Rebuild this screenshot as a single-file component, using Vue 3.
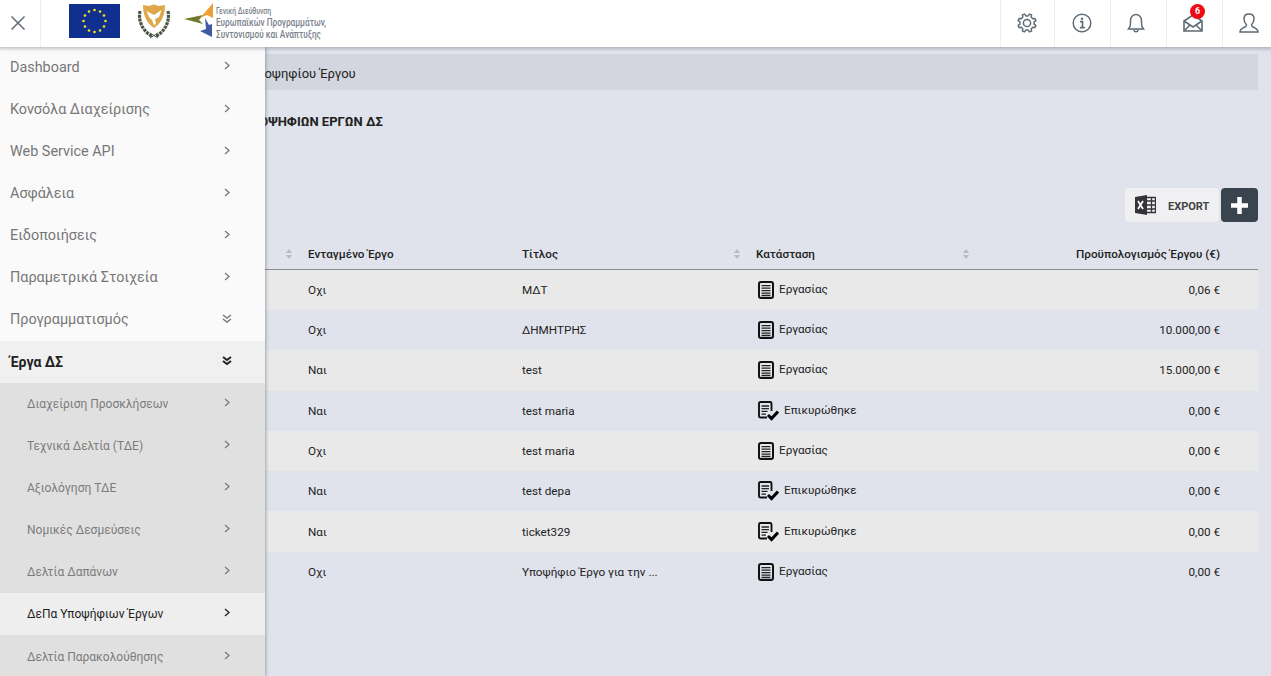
<script setup>
const menu = [
  { label: 'Dashboard' },
  { label: 'Κονσόλα Διαχείρισης' },
  { label: 'Web Service API' },
  { label: 'Ασφάλεια' },
  { label: 'Ειδοποιήσεις' },
  { label: 'Παραμετρικά Στοιχεία' },
  { label: 'Προγραμματισμός', open: true },
  { label: 'Έργα ΔΣ', open: true, active: true },
  { label: 'Διαχείριση Προσκλήσεων', sub: true },
  { label: 'Τεχνικά Δελτία (ΤΔΕ)', sub: true },
  { label: 'Αξιολόγηση ΤΔΕ', sub: true },
  { label: 'Νομικές Δεσμεύσεις', sub: true },
  { label: 'Δελτία Δαπάνων', sub: true },
  { label: 'ΔεΠα Υποψήφιων Έργων', sub: true, current: true },
  { label: 'Δελτία Παρακολούθησης', sub: true },
]
const W = 'Εργασίας'
const E = 'Επικυρώθηκε'
const rows = [
  ['Οχι', 'ΜΔΤ', W, '0,06 €'],
  ['Οχι', 'ΔΗΜΗΤΡΗΣ', W, '10.000,00 €'],
  ['Ναι', 'test', W, '15.000,00 €'],
  ['Ναι', 'test maria', E, '0,00 €'],
  ['Οχι', 'test maria', W, '0,00 €'],
  ['Ναι', 'test depa', E, '0,00 €'],
  ['Ναι', 'ticket329', E, '0,00 €'],
  ['Οχι', 'Υποψήφιο Έργο για την ...', W, '0,00 €'],
]
const stars = Array.from({ length: 12 }, (_, i) => {
  const a = (i * Math.PI) / 6
  return { x: 25.5 + 11 * Math.sin(a), y: 17 - 11 * Math.cos(a) }
})
const gear = (() => {
  const pts = []
  const n = 8
  for (let i = 0; i < n; i++) {
    const c = (i * 2 * Math.PI) / n + Math.PI / 8
    const step = (2 * Math.PI) / n
    const list = [[-0.3, 7.2], [-0.16, 9.2], [0.16, 9.2], [0.3, 7.2]]
    list.forEach(([o, r]) => {
      const a = c + o * step
      pts.push(`${(10 + r * Math.cos(a)).toFixed(2)} ${(10 + r * Math.sin(a)).toFixed(2)}`)
    })
  }
  return 'M' + pts.join('L') + 'Z'
})()
</script>

<template>
  <div class="page">
    <header class="top">
      <div class="close-cell">
        <svg width="16" height="16" viewBox="0 0 16 16"><path d="M1.500 1.500l13 13M14.500 1.500l-13 13" stroke="#5f6b76" stroke-width="1.500" fill="none"/></svg>
      </div>
      <div class="logos">
        <svg class="eu" width="51" height="34" viewBox="0 0 51 34">
          <rect width="51" height="34" fill="#10308f"/>
          <circle v-for="(s, i) in stars" :key="i" :cx="s.x" :cy="s.y" r="1.300" fill="#f7e017"/>
        </svg>
        <svg class="arms" width="34" height="36" viewBox="0 0 34 36">
          <path d="M6 2l6 1 5-1.500L22 3l6-1c0 12-5 19-11 23C11 21 6 14 6 2z" fill="#dfa64a"/>
          <path d="M9.500 8l7.500 4 7.500-5-2.500 7-4 2 1 4-2 2.500-2-5.500-3-3z" fill="#fff"/>
          <path d="M3 8c-2 9 2 20 12 25M31 8c2 9-2 20-12 25" stroke="#4b5644" stroke-width="3.200" stroke-dasharray="3 .8" fill="none"/>
          <path d="M13 35l8-5M21 35l-8-5" stroke="#555" stroke-width="1"/>
        </svg>
        <div class="dg">
          <svg width="30" height="37" viewBox="0 0 30 37">
            <path d="M0 16l19-4-4 5 4 4z" fill="#6f7a2f"/>
            <path d="M29 0L16 15l7-3 6 3z" fill="#ee9f35"/>
            <path d="M21 15l4 7 3-1v13L16 28l6-2z" fill="#3f5da3"/>
          </svg>
          <div class="dg-text">
            <span class="dg1">Γενική Διεύθυνση</span>
            <span class="dg2">Ευρωπαϊκών Προγραμμάτων,</span>
            <span class="dg2">Συντονισμού και Ανάπτυξης</span>
          </div>
        </div>
      </div>
      <div class="tools">
        <div class="tool t1">
          <svg width="20" height="20" viewBox="0 0 20 20" fill="none" stroke="#5f6b76" stroke-width="1.500"><path :d="gear" stroke-linejoin="round"/><circle cx="10" cy="10" r="3.600"/></svg>
        </div>
        <div class="tool t2">
          <svg width="20" height="20" viewBox="0 0 20 20" fill="none" stroke="#5f6b76" stroke-width="1.500"><circle cx="10" cy="10" r="8.800"/><circle cx="10" cy="5.800" r="1.200" fill="#5f6b76" stroke="none"/><path d="M8 8.700h2.500v6M7.800 14.700h5" stroke-width="1.700"/></svg>
        </div>
        <div class="tool t3">
          <svg width="18" height="20" viewBox="0 0 18 20" fill="none" stroke="#5f6b76" stroke-width="1.500"><path d="M1.500 16c1.500-1.500 2-3 2-6V7.500C3.500 4 6 1.500 9 1.500s5.500 2.500 5.500 6V10c0 3 .5 4.500 2 6z"/><path d="M7 16.500c0 3 4 3 4 0"/></svg>
        </div>
        <div class="tool t4">
          <svg width="20" height="18" viewBox="0 0 20 18" fill="none" stroke="#5f6b76" stroke-width="1.600"><path d="M1 7v10h18V7L10 1z"/><path d="M1 7l9 6 9-6M1 17l6.500-6.500M19 17l-6.500-6.500"/></svg>
          <span class="badge">6</span>
        </div>
        <div class="tool t5">
          <svg width="20" height="20" viewBox="0 0 20 20" fill="none" stroke="#5f6b76" stroke-width="1.500"><path d="M1 19h18c0-3-2-3.500-4-4.500-2-.8-2.500-1.500-2.500-2.800 1.500-1.500 2.500-3.500 2.500-6C15 3 13 1 10 1S5 3 5 5.700c0 2.500 1 4.500 2.500 6 0 1.300-.5 2-2.500 2.800-2 1-4 1.500-4 4.500z"/></svg>
        </div>
      </div>
    </header>

    <aside class="side">
      <div
        v-for="m in menu"
        :key="m.label"
        class="item"
        :class="{ sub: m.sub, active: m.active, current: m.current }"
      >
        <span>{{ m.label }}</span>
        <svg v-if="m.open" class="chev" width="10" height="9" viewBox="0 0 10 9" fill="none" stroke="currentColor" :stroke-width="m.active ? 2 : 1.400"><path d="M1 1l4 3 4-3M1 5l4 3 4-3"/></svg>
        <svg v-else class="chev" width="10" height="9" viewBox="0 0 10 9" fill="none" stroke="currentColor" stroke-width="1.300"><path d="M3 1l4 3.500L3 8"/></svg>
      </div>
    </aside>

    <main class="main">
      <div class="crumb">Υποψηφίου Έργου</div>
      <h1 class="title">ΥΠΟΨΗΦΙΩΝ ΕΡΓΩΝ ΔΣ</h1>
      <div class="actions">
        <div class="export">
          <svg width="21" height="20" viewBox="0 0 21 20"><path d="M0 2L12 0v20L0 18z" fill="#333539"/><path d="M3 6l5 8M8 6l-5 8" stroke="#fff" stroke-width="1.700"/><path d="M12 2.500h8.500v15H12M12 6h8.500M12 10h8.500M12 14h8.500M16.500 2.500v15" stroke="#333539" stroke-width="1.300" fill="none"/></svg>
          <span>EXPORT</span>
        </div>
        <div class="plus">
          <svg width="17" height="17" viewBox="0 0 17 17"><path d="M8.500 0v17M0 8.500h17" stroke="#fff" stroke-width="4.500"/></svg>
        </div>
      </div>
      <div class="table">
        <div class="row head">
          <div class="cell"><svg class="sort" width="6" height="10" viewBox="0 0 6 10"><path d="M3 0l3 4H0zM3 10L0 6h6z"/></svg></div>
          <div class="cell">Ενταγμένο Έργο</div>
          <div class="cell">Τίτλος<svg class="sort" width="6" height="10" viewBox="0 0 6 10"><path d="M3 0l3 4H0zM3 10L0 6h6z"/></svg></div>
          <div class="cell">Κατάσταση<svg class="sort" width="6" height="10" viewBox="0 0 6 10"><path d="M3 0l3 4H0zM3 10L0 6h6z"/></svg></div>
          <div class="cell num">Προϋπολογισμός Έργου (€)</div>
        </div>
        <div v-for="(r, i) in rows" :key="i" class="row" :class="{ odd: i % 2 === 0 }">
          <div class="cell"></div>
          <div class="cell">{{ r[0] }}</div>
          <div class="cell">{{ r[1] }}</div>
          <div class="cell status" :class="{ ok: r[2] === E }">
            <svg v-if="r[2] === W" width="16" height="18" viewBox="0 0 16 18" fill="none"><rect x="1" y="1" width="14" height="16" rx="2" stroke="#111" stroke-width="2"/><path d="M3.500 4.700h9M3.500 7.200h9M3.500 9.700h9M3.500 12.200h9M3.500 14.500h9" stroke="#222" stroke-width="1.300"/></svg>
            <svg v-else width="21" height="20" viewBox="0 0 21 20" fill="none"><path d="M9 16.500H2.500a1.500 1.500 0 0 1-1.500-1.500V2.500A1.500 1.500 0 0 1 2.500 1h9.500a1.500 1.500 0 0 1 1.500 1.500V10" stroke="#111" stroke-width="1.900"/><path d="M3.500 5h7.500M3.500 7.700h7.500M3.500 10.400h6M3.500 13.100h4.500" stroke="#222" stroke-width="1.300"/><path d="M10 14l3.500 3.500L20 10.500" stroke="#000" stroke-width="3"/></svg>
            <span>{{ r[2] }}</span>
          </div>
          <div class="cell num">{{ r[3] }}</div>
        </div>
      </div>
    </main>
  </div>
</template>

<style>
html, body { margin: 0; overflow: hidden; }
</style>

<style scoped>
.page {
  position: relative;
  height: 676px;
  overflow: hidden;
  background: #e0e3ec;
  font-family: Roboto, "Noto Sans", sans-serif;
  color: #222;
}
.top {
  position: relative;
  z-index: 3;
  display: flex;
  height: 47px;
  background: #fff;
  box-shadow: 0 1px 3px 1px rgba(90, 95, 110, .35);
}
.close-cell {
  width: 41px;
  box-sizing: border-box;
  display: flex;
  align-items: center;
  justify-content: center;
  padding: 0 5px 2px 0;
  border-right: 1px solid #eee;
}
.logos {
  display: flex;
  align-items: center;
  padding: 0 0 5px 28px;
  flex: 1;
}
.arms { margin-left: 17px; }
.dg { display: flex; align-items: center; margin-left: 13px; }
.dg-text { display: flex; flex-direction: column; margin: 3px 0 0 2px; color: #7a828c; line-height: 12px; white-space: nowrap; }
.dg1 { font-size: 8.500px; transform: scaleX(.8); transform-origin: left center; font-weight: 500; }
.dg2 { font-size: 10.500px; font-weight: 500; transform: scaleX(.785); transform-origin: left center; }
.tools { display: flex; }
.tool {
  position: relative;
  box-sizing: border-box;
  border-left: 1px solid #eee;
  display: flex;
  align-items: center;
  justify-content: center;
  padding-bottom: 2px;
}
.t1 { width: 54px; padding-right: 2px; }
.t2 { width: 56px; padding-right: 2px; }
.t3 { width: 56px; padding-right: 6px; }
.t4 { width: 56px; padding-right: 4px; }
.t5 { width: 49px; padding-left: 3px; }
.badge {
  position: absolute;
  top: 4px;
  left: 23px;
  width: 15px;
  height: 15px;
  border-radius: 50%;
  background: #f00a14;
  color: #fff;
  font-size: 9px;
  font-weight: 700;
  line-height: 15px;
  text-align: center;
}
.side {
  position: absolute;
  z-index: 2;
  left: 0;
  top: 46.400px;
  width: 265px;
  bottom: 0;
  background: #fafafa;
  box-shadow: 1px 0 3px rgba(90, 95, 110, .5);
}
.item {
  display: flex;
  align-items: center;
  justify-content: space-between;
  height: 42.080px;
  padding: 0 33px 0 10px;
  box-sizing: border-box;
  font-size: 14.400px;
  color: #777;
}
.chev { margin-top: -3px; }
.item.active { background: #f0f0f0; color: #222; font-weight: 700; font-size: 14px; }
.item.sub { background: #e0e0e0; font-size: 12px; padding-left: 27px; color: #7c7c7c; }
.item.current { background: #eee; color: #222; }
.main { padding: 7px 13px 0; }
.crumb {
  height: 36px;
  line-height: 39px;
  background: #d3d6df;
  font-size: 13px;
  padding-left: 236px;
  box-sizing: border-box;
}
.title {
  margin: 24px 0 0;
  font-size: 13px;
  font-weight: 700;
  line-height: 15px;
  padding-left: 229px;
  color: #222;
}
.actions {
  display: flex;
  justify-content: flex-end;
  gap: 2px;
  margin-top: 59px;
}
.export {
  width: 94px;
  height: 34px;
  box-sizing: border-box;
  background: #f0f0f2;
  border-radius: 4px;
  display: flex;
  align-items: center;
  padding-left: 10px;
  gap: 12px;
  font-size: 11px;
  font-weight: 700;
  color: #444;
}
.export span { position: relative; top: 1px; }
.plus {
  width: 37px;
  height: 34px;
  background: #39444e;
  border-radius: 4px;
  display: flex;
  align-items: center;
  justify-content: center;
}
.table { margin-top: 18px; }
.row {
  display: grid;
  grid-template-columns: 287px 214px 234px 229px 1fr;
  height: 40.300px;
  font-size: 11.700px;
  align-items: center;
}
.row.head {
  height: 29.700px;
  font-weight: 500;
  border-bottom: 1px solid #8b8b8b;
  box-sizing: border-box;
}
.row.odd { background: #e9e9e9; }
.cell { padding: 0 8px; display: flex; align-items: center; }
.cell.num { justify-content: flex-end; padding-right: 38px; }
.sort { margin-left: auto; fill: #b8bbc2; }
.status { gap: 5px; padding-left: 10px; }
.status svg { flex: none; }
.status span { position: relative; top: -1px; }
</style>
